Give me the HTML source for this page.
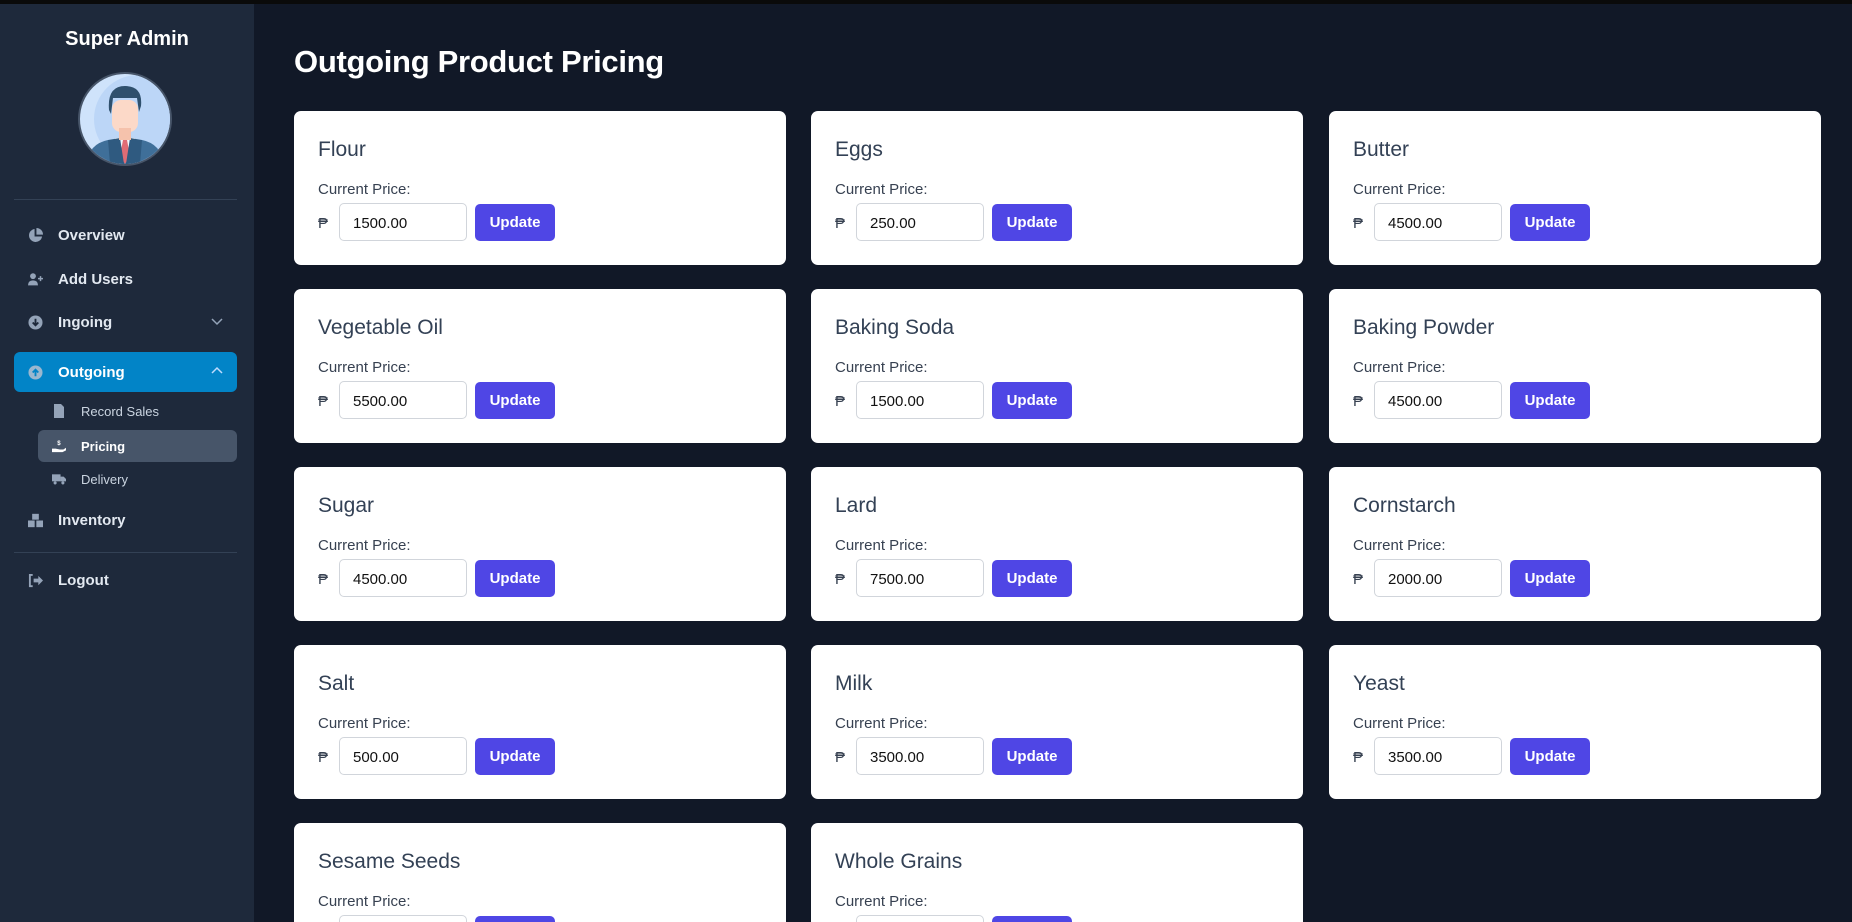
<!DOCTYPE html>
<html><head><meta charset="utf-8"><style>
*{box-sizing:border-box;margin:0;padding:0}
html,body{width:1852px;height:922px;overflow:hidden}
body{background:#111827;font-family:"Liberation Sans",Arial,sans-serif}
#wrap{position:relative;width:1852px;height:922px;overflow:hidden;background:#111827}
.topbar{position:absolute;left:0;top:0;width:1852px;height:4px;background:#0a0a0a;z-index:5}
.side{position:absolute;left:0;top:0;width:254px;height:922px;background:#1e293b}
.side h2{position:absolute;top:28px;width:254px;text-align:center;color:#fff;font-size:20px;font-weight:bold}
.av{position:absolute;left:78px;top:72px;width:94px;height:94px;border-radius:50%;border:2px solid #475569;background:#cfe3fb;overflow:hidden}
.div{position:absolute;left:14px;width:223px;height:1px;background:#334155}
.it{position:absolute;left:14px;width:223px;height:40px;color:#e2e8f0;font-size:15px;font-weight:bold;display:flex;align-items:center;padding-left:44px}
.it .ic{position:absolute;left:14px;top:13px;width:15px;height:15px}
.it.act{background:#0284c7;border-radius:6px;color:#fff}
.chev{position:absolute;right:14px;top:13px}
.sub{position:absolute;left:38px;width:199px;height:32px;color:#cbd5e1;font-size:13px;display:flex;align-items:center;padding-left:43px}
.sub .ic{position:absolute;left:14px;top:9px;width:14px;height:14px}
.sub.act{background:#475569;border-radius:6px;color:#fff;font-weight:bold}
h1{position:absolute;left:294px;top:44px;color:#fff;font-size:31px;font-weight:bold;letter-spacing:-0.3px}
.card{position:absolute;width:492px;height:154px;background:#fff;border-radius:7px}
.card h3{position:absolute;left:24px;top:27px;font-size:21px;font-weight:normal;color:#334155}
.card .lb{position:absolute;left:24px;top:70px;font-size:15px;color:#374151}
.card .peso{position:absolute;left:24px;top:104px;font-size:15px;color:#374151}
.card .in{position:absolute;left:45px;top:92px;width:128px;height:38px;border:1px solid #d1d5db;border-radius:5px;font-size:15px;color:#111;padding:11px 0 0 13px}
.card .bt{position:absolute;left:181px;top:93px;width:80px;height:37px;background:#4f46e5;border-radius:5px;color:#fff;font-size:15px;font-weight:bold;text-align:center;line-height:37px}
</style></head><body><div id="wrap">
<div class="topbar"></div>
<div class="side">
<h2>Super Admin</h2>
<div class="av"><svg width="90" height="90" viewBox="0 0 90 90"><circle cx="58" cy="45" r="44" fill="#bcd6f7"/><path d="M6 92 Q8 70 28 66 L62 66 Q82 70 84 92Z" fill="#3f6f99"/><path d="M35 64 L55 64 L51 86 L39 86Z" fill="#f1f5f9"/><path d="M43 66 L47 66 L50 82 L45 90 L40 82Z" fill="#e06c75"/><path d="M28 66 L40 64 L44 90 L30 90Z" fill="#2f5a80"/><path d="M62 66 L50 64 L46 90 L60 90Z" fill="#2f5a80"/><rect x="32" y="26" width="26" height="32" rx="9" fill="#fcd9c8"/><path d="M39 54 L51 54 L51 66 L39 66Z" fill="#f5c2ac"/><path d="M29 36 Q27 12 45 12 Q63 12 61 32 L59 38 L57 24 L33 24 L31 40Z" fill="#2f506d"/></svg></div>
<div class="div" style="top:199px"></div>
<div class="it" style="top:215px"><svg class="ic" viewBox="0 0 16 16"><path d="M7 1A7 7 0 1 0 15 9H7Z" fill="#94a3b8"/><path d="M9 0A7 7 0 0 1 16 7H9Z" fill="#94a3b8"/></svg>Overview</div>
<div class="it" style="top:259px"><svg class="ic" viewBox="0 0 18 16"><circle cx="6" cy="4" r="3.5" fill="#94a3b8"/><path d="M0 15Q0 9 6 9Q12 9 12 15Z" fill="#94a3b8"/><path d="M15 4v6M12 7h6" stroke="#94a3b8" stroke-width="1.8"/></svg>Add Users</div>
<div class="it" style="top:302px"><svg class="ic" viewBox="0 0 16 16"><circle cx="8" cy="8" r="7.5" fill="#94a3b8"/><path d="M8 4v7M5 8l3 3 3-3" stroke="#1e293b" stroke-width="2" fill="none"/></svg>Ingoing<svg class="chev" width="12" height="12" viewBox="0 0 12 12"><path d="M1 4l5 5 5-5" stroke="#94a3b8" stroke-width="1.5" fill="none"/></svg></div>
<div class="it act" style="top:352px"><svg class="ic" viewBox="0 0 16 16"><circle cx="8" cy="8" r="7.5" fill="#9ab7cf"/><path d="M8 12V5M5 8l3-3 3 3" stroke="#0284c7" stroke-width="2" fill="none"/></svg>Outgoing<svg class="chev" width="12" height="12" viewBox="0 0 12 12"><path d="M1 8l5-5 5 5" stroke="#bfdbfe" stroke-width="1.5" fill="none"/></svg></div>
<div class="sub" style="top:395px"><svg class="ic" viewBox="0 0 14 14"><path d="M2 0h7l3 3v11H2Z" fill="#94a3b8"/></svg>Record Sales</div>
<div class="sub act" style="top:430px"><svg class="ic" viewBox="0 0 16 14"><text x="6" y="6" font-size="7" fill="#fff" font-weight="bold">$</text><path d="M0 10h4l5 1h4l3-2v3l-4 2H0Z" fill="#fff"/></svg>Pricing</div>
<div class="sub" style="top:463px"><svg class="ic" viewBox="0 0 18 14"><rect x="0" y="1" width="11" height="9" fill="#94a3b8"/><path d="M11 4h4l3 3v3h-7Z" fill="#94a3b8"/><circle cx="4" cy="12" r="2" fill="#94a3b8"/><circle cx="14" cy="12" r="2" fill="#94a3b8"/></svg>Delivery</div>
<div class="it" style="top:500px"><svg class="ic" viewBox="0 0 18 16"><rect x="0" y="8" width="8" height="8" fill="#94a3b8"/><rect x="10" y="8" width="8" height="8" fill="#94a3b8"/><rect x="5" y="0" width="8" height="7" fill="#94a3b8"/></svg>Inventory</div>
<div class="div" style="top:552px"></div>
<div class="it" style="top:560px"><svg class="ic" viewBox="0 0 16 16"><path d="M5 2H2v12h3" stroke="#94a3b8" stroke-width="2" fill="none"/><path d="M6 6h5V3l5 5-5 5v-3H6Z" fill="#94a3b8"/></svg>Logout</div>
</div>
<h1>Outgoing Product Pricing</h1>

<div class="card" style="left:294px;top:111px"><h3>Flour</h3><div class="lb">Current Price:</div><div class="peso">₱</div><div class="in">1500.00</div><div class="bt">Update</div></div>
<div class="card" style="left:811px;top:111px"><h3>Eggs</h3><div class="lb">Current Price:</div><div class="peso">₱</div><div class="in">250.00</div><div class="bt">Update</div></div>
<div class="card" style="left:1329px;top:111px"><h3>Butter</h3><div class="lb">Current Price:</div><div class="peso">₱</div><div class="in">4500.00</div><div class="bt">Update</div></div>

<div class="card" style="left:294px;top:289px"><h3>Vegetable Oil</h3><div class="lb">Current Price:</div><div class="peso">₱</div><div class="in">5500.00</div><div class="bt">Update</div></div>
<div class="card" style="left:811px;top:289px"><h3>Baking Soda</h3><div class="lb">Current Price:</div><div class="peso">₱</div><div class="in">1500.00</div><div class="bt">Update</div></div>
<div class="card" style="left:1329px;top:289px"><h3>Baking Powder</h3><div class="lb">Current Price:</div><div class="peso">₱</div><div class="in">4500.00</div><div class="bt">Update</div></div>

<div class="card" style="left:294px;top:467px"><h3>Sugar</h3><div class="lb">Current Price:</div><div class="peso">₱</div><div class="in">4500.00</div><div class="bt">Update</div></div>
<div class="card" style="left:811px;top:467px"><h3>Lard</h3><div class="lb">Current Price:</div><div class="peso">₱</div><div class="in">7500.00</div><div class="bt">Update</div></div>
<div class="card" style="left:1329px;top:467px"><h3>Cornstarch</h3><div class="lb">Current Price:</div><div class="peso">₱</div><div class="in">2000.00</div><div class="bt">Update</div></div>

<div class="card" style="left:294px;top:645px"><h3>Salt</h3><div class="lb">Current Price:</div><div class="peso">₱</div><div class="in">500.00</div><div class="bt">Update</div></div>
<div class="card" style="left:811px;top:645px"><h3>Milk</h3><div class="lb">Current Price:</div><div class="peso">₱</div><div class="in">3500.00</div><div class="bt">Update</div></div>
<div class="card" style="left:1329px;top:645px"><h3>Yeast</h3><div class="lb">Current Price:</div><div class="peso">₱</div><div class="in">3500.00</div><div class="bt">Update</div></div>

<div class="card" style="left:294px;top:823px"><h3>Sesame Seeds</h3><div class="lb">Current Price:</div><div class="peso">₱</div><div class="in">0.00</div><div class="bt">Update</div></div>
<div class="card" style="left:811px;top:823px"><h3>Whole Grains</h3><div class="lb">Current Price:</div><div class="peso">₱</div><div class="in">0.00</div><div class="bt">Update</div></div>
</div></body></html>
